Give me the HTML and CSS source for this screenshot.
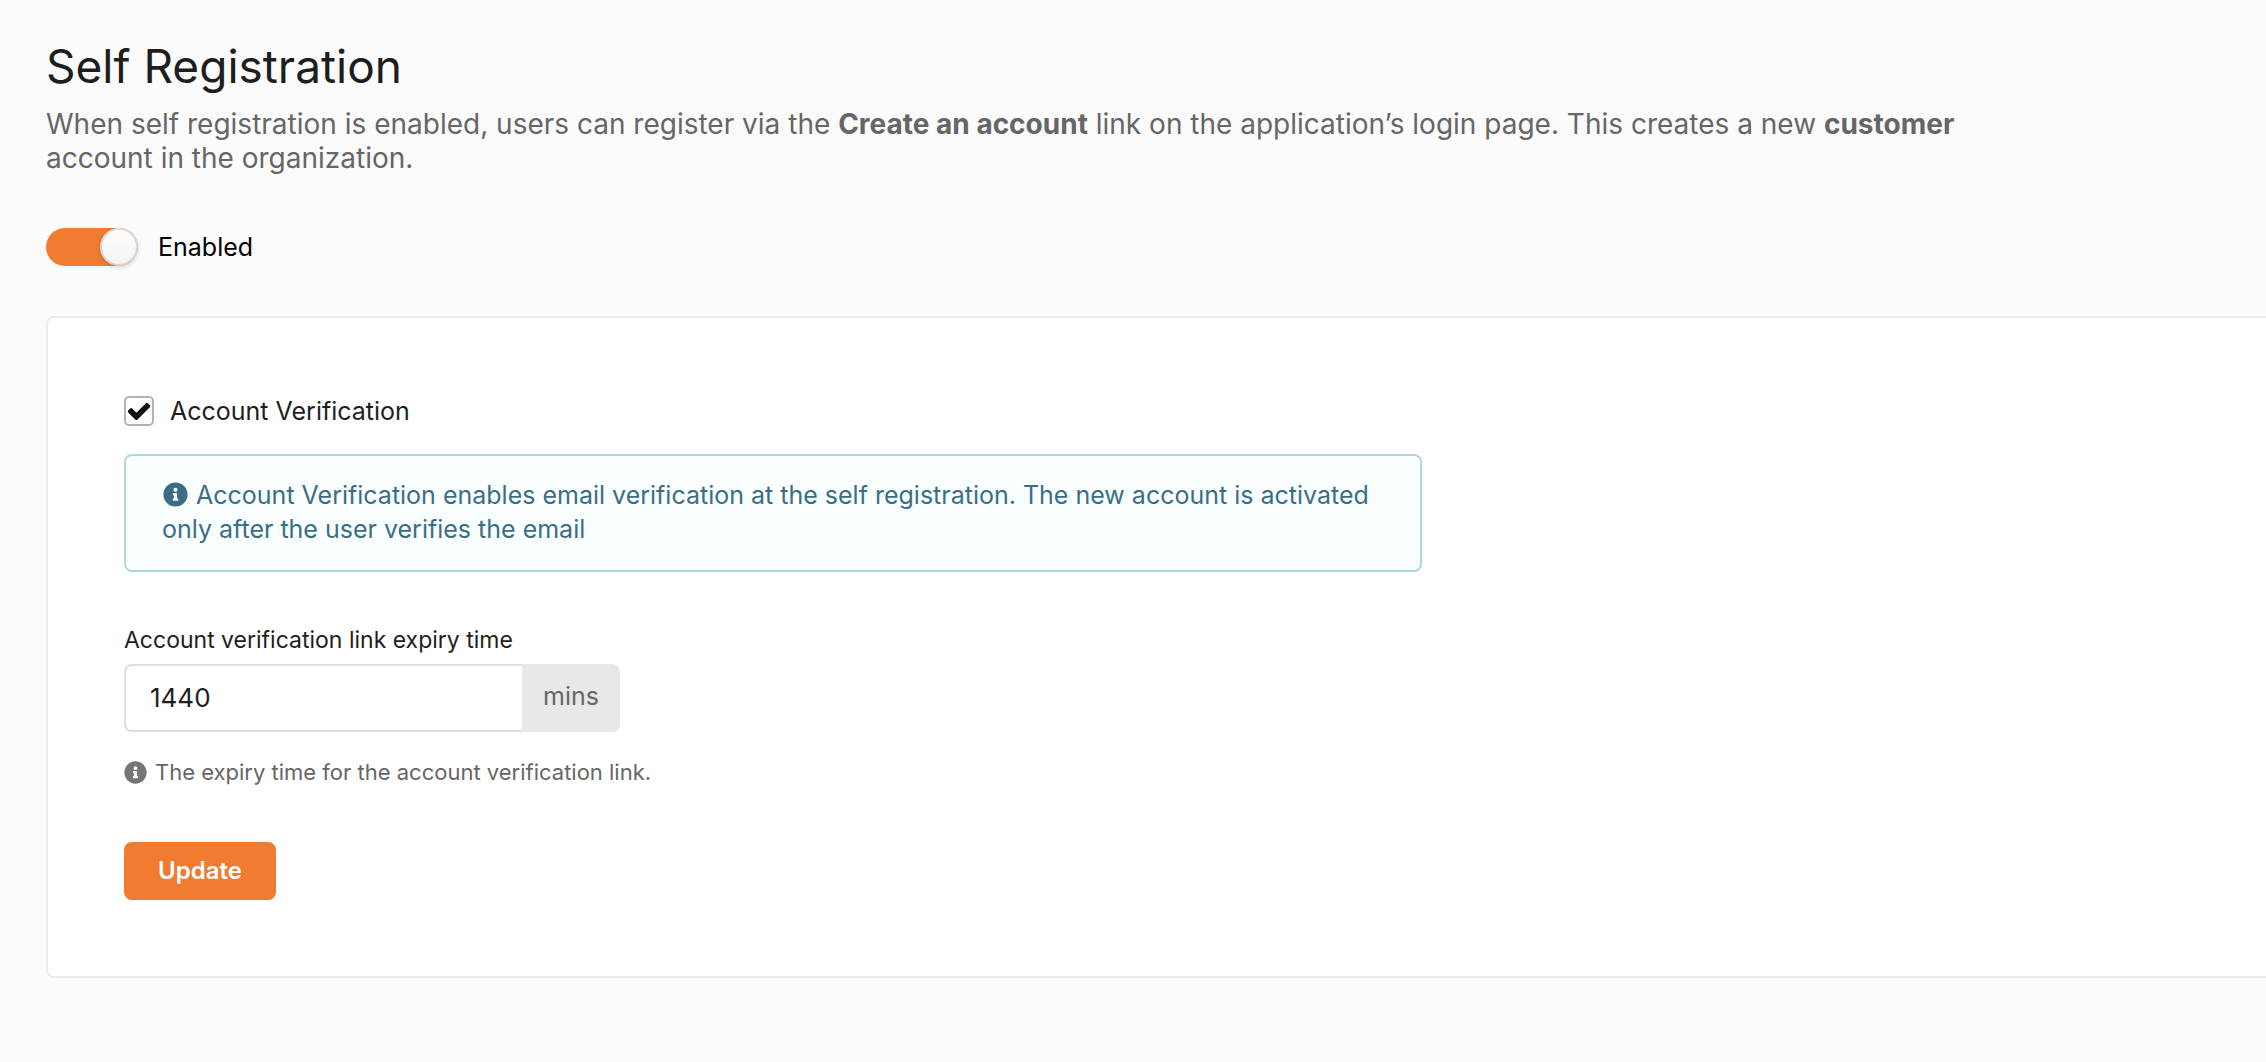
FILE: index.html
```html
<!DOCTYPE html>
<html lang="en">
<head>
<meta charset="utf-8">
<title>Self Registration</title>
<link rel="stylesheet" href="styles.css">
</head>
<body>
<main class="page">
  <header class="intro">
    <h1 class="title">Self Registration</h1>
    <p class="lead">When self registration is enabled, users can register via the <strong>Create an account</strong> link on the application’s login page. This creates a new <strong>customer</strong> account in the organization.</p>
  </header>
  <label class="toggle">
    <input class="switch" type="checkbox" role="switch" checked>
    <span>Enabled</span>
  </label>
  <form class="card">
    <label class="check">
      <span class="check-mark">
        <input class="check-input" type="checkbox" checked>
        <svg class="check-icon" viewBox="0 0 1792 1792" aria-hidden="true"><path d="M1671 566q0 40-28 68l-724 724-136 136q-28 28-68 28t-68-28l-136-136-362-362q-28-28-28-68t28-68l136-136q28-28 68-28t68 28l294 295 656-657q28-28 68-28t68 28l136 136q28 28 28 68z"/></svg>
      </span>
      <span>Account Verification</span>
    </label>
    <p class="notice"><svg class="info" viewBox="0 0 512 512" aria-hidden="true"><path d="M256 8C119 8 8 119.100 8 256c0 137 111 248 248 248s248-111 248-248C504 119.100 393 8 256 8zm0 110a42 42 0 1 1 0 84 42 42 0 0 1 0-84zm56 254c0 6.600-5.400 12-12 12h-88c-6.600 0-12-5.400-12-12v-24c0-6.600 5.400-12 12-12h12v-64h-12c-6.600 0-12-5.400-12-12v-24c0-6.600 5.400-12 12-12h64c6.600 0 12 5.400 12 12v100h12c6.600 0 12 5.400 12 12v24z"/></svg> Account Verification enables email verification at the self registration. The new account is activated only after the user verifies the email</p>
    <label class="field-label" for="expiry">Account verification link expiry time</label>
    <div class="field">
      <input class="field-input" id="expiry" type="text" inputmode="numeric" value="1440">
      <span class="unit">mins</span>
    </div>
    <p class="hint"><svg class="info" viewBox="0 0 512 512" aria-hidden="true"><path d="M256 8C119 8 8 119.100 8 256c0 137 111 248 248 248s248-111 248-248C504 119.100 393 8 256 8zm0 110a42 42 0 1 1 0 84 42 42 0 0 1 0-84zm56 254c0 6.600-5.400 12-12 12h-88c-6.600 0-12-5.400-12-12v-24c0-6.600 5.400-12 12-12h12v-64h-12c-6.600 0-12-5.400-12-12v-24c0-6.600 5.400-12 12-12h64c6.600 0 12 5.400 12 12v100h12c6.600 0 12 5.400 12 12v24z"/></svg><span>The expiry time for the account verification link.</span></p>
    <button class="update" type="submit">Update</button>
  </form>
</main>
</body>
</html>
```
FILE: styles.css
```css
* { box-sizing: border-box; }
body {
  margin: 0;
  background: #fbfbfb;
  color: #1e1e1e;
  font-family: Inter, "Liberation Sans", sans-serif;
  font-size: 25px;
}
.page { padding: 34px 0 80px 46px; }
.title { margin: 0; font-size: 46px; line-height: 64px; font-weight: 400; }
.lead { max-width: 1940px; margin: 9px 0 0; font-size: 28px; line-height: 34px; color: #666; }
.toggle { display: flex; align-items: center; gap: 20px; width: fit-content; margin-top: 53px; color: #000; }
.switch {
  appearance: none; display: flex; justify-content: flex-end;
  width: 92px; height: 38px; margin: 0; border-radius: 20px; background: #f07b31;
}
.switch::before {
  content: ""; width: 38px; height: 38px; border-radius: 50%;
  background: linear-gradient(#fff, #f2f2f2);
  box-shadow: 0 2px 4px rgba(34,36,38,.15), 0 0 0 2px rgba(34,36,38,.15) inset;
}
.card {
  margin-top: 50px; padding: 76px;
  background: #fff; border: 2px solid #ececec; border-right: 0; border-radius: 8px 0 0 8px;
}
.check { display: flex; align-items: center; gap: 16px; width: fit-content; line-height: 34px; }
.check-mark { display: grid; place-items: center; }
.check-mark > * { grid-area: 1 / 1; }
.check-input { appearance: none; width: 30px; height: 30px; margin: 0; border: 2px solid #b3b3b3; border-radius: 5px; background: #fff; }
.check-icon { width: 26px; height: 26px; fill: #111; pointer-events: none; }
.notice {
  max-width: 1298px; margin: 26px 0 0; padding: 22px 36px 24px;
  border: 2px solid #b0d7de; border-radius: 8px; background: #f9ffff; color: #3b6e84; line-height: 34px;
}
.info { width: 25px; height: 25px; fill: currentColor; }
.notice .info { margin: 0 1px; vertical-align: -3px; }
.field-label { display: block; margin-top: 52px; font-size: 23px; line-height: 32px; }
.field { display: flex; width: 496px; margin-top: 8px; }
.field-input {
  flex: 1; min-width: 0; height: 68px; padding: 0 24px 2px; font: inherit; font-size: 26px; color: #1e1e1e;
  border: 2px solid #dedede; border-right: 0; border-radius: 8px 0 0 8px; background: #fff;
}
.unit { display: grid; place-items: center; width: 98px; padding-bottom: 4px; border-radius: 0 8px 8px 0; background: #e8e8e8; color: #666; }
.hint { display: flex; align-items: center; gap: 8px; margin: 24px 0 0; font-size: 22px; line-height: 32px; color: #666; }
.hint .info { width: 23px; height: 23px; fill: #767676; }
.update { display: block; margin-top: 54px; width: 152px; height: 58px; border: 0; border-radius: 8px; background: #f07b31; color: #fff; font: 600 24px/34px Inter, "Liberation Sans", sans-serif; }
```
